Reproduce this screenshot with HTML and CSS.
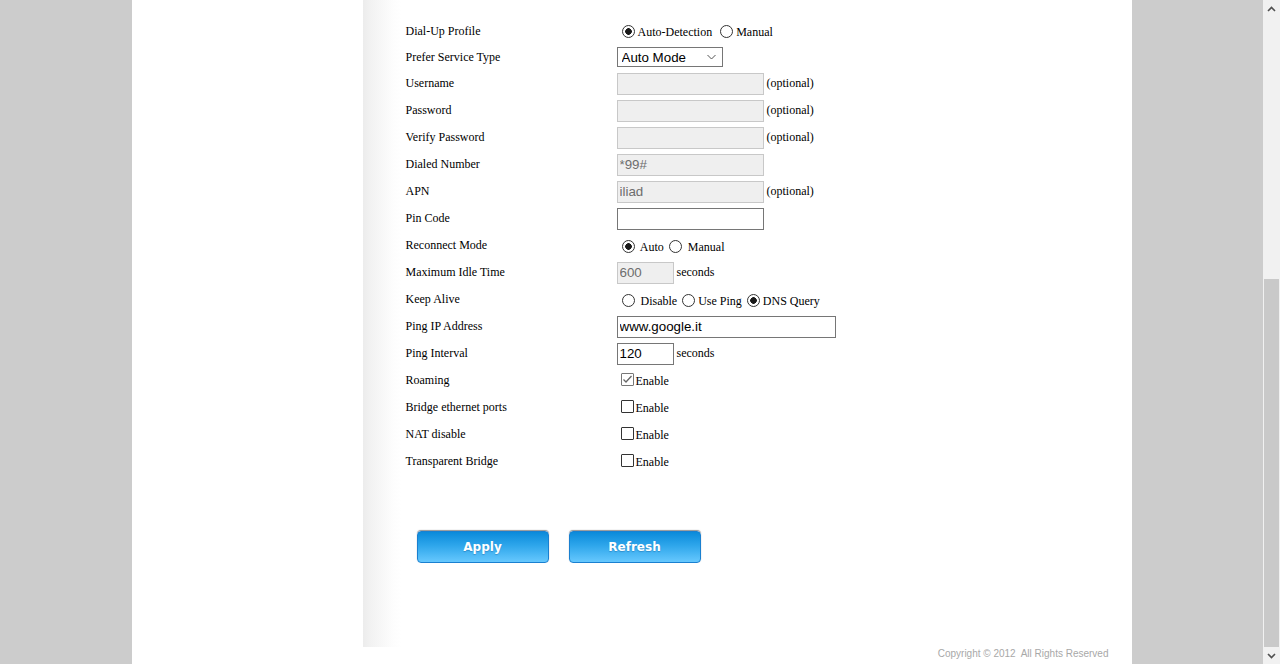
FILE: index.html
```html
<!DOCTYPE html>
<html lang="en">
<head>
<meta charset="utf-8">
<title>Dial-Up Settings</title>
<link rel="stylesheet" href="styles.css">
</head>
<body>
<div class="stage">
  <div class="page">
    <div class="layout">
      <div class="sidebar"></div>
      <div class="content">
        <form class="form">
          <div class="lbl">Dial-Up Profile</div>
          <div class="val"><span class="v"><input type="radio" class="radio" name="prof" checked>Auto-Detection <input type="radio" class="radio" name="prof">Manual</span></div>

          <div class="lbl">Prefer Service Type</div>
          <div class="val"><select class="sel"><option>Auto Mode</option></select></div>

          <div class="lbl">Username</div>
          <div class="val"><span class="v"><input type="text" class="txt dis" disabled> (optional)</span></div>

          <div class="lbl">Password</div>
          <div class="val"><span class="v"><input type="password" class="txt dis" disabled> (optional)</span></div>

          <div class="lbl">Verify Password</div>
          <div class="val"><span class="v"><input type="password" class="txt dis" disabled> (optional)</span></div>

          <div class="lbl">Dialed Number</div>
          <div class="val"><span class="v"><input type="text" class="txt dis" value="*99#" disabled></span></div>

          <div class="lbl">APN</div>
          <div class="val"><span class="v"><input type="text" class="txt dis" value="iliad" disabled> (optional)</span></div>

          <div class="lbl">Pin Code</div>
          <div class="val"><span class="v"><input type="text" class="txt"></span></div>

          <div class="lbl">Reconnect Mode</div>
          <div class="val"><span class="v"><input type="radio" class="radio" name="rec" checked> Auto<input type="radio" class="radio" name="rec"> Manual</span></div>

          <div class="lbl">Maximum Idle Time</div>
          <div class="val"><span class="v"><input type="text" class="txt short dis" value="600" disabled> seconds</span></div>

          <div class="lbl">Keep Alive</div>
          <div class="val"><span class="v"><input type="radio" class="radio" name="ka"> Disable<input type="radio" class="radio" name="ka">Use Ping<input type="radio" class="radio" name="ka" checked>DNS Query</span></div>

          <div class="lbl">Ping IP Address</div>
          <div class="val"><span class="v"><input type="text" class="txt wide" value="www.google.it"></span></div>

          <div class="lbl">Ping Interval</div>
          <div class="val"><span class="v"><input type="text" class="txt short" value="120"> seconds</span></div>

          <div class="lbl">Roaming</div>
          <div class="val"><span class="v"><input type="checkbox" class="chk" checked>Enable</span></div>

          <div class="lbl">Bridge ethernet ports</div>
          <div class="val"><span class="v"><input type="checkbox" class="chk">Enable</span></div>

          <div class="lbl">NAT disable</div>
          <div class="val"><span class="v"><input type="checkbox" class="chk">Enable</span></div>

          <div class="lbl">Transparent Bridge</div>
          <div class="val"><span class="v"><input type="checkbox" class="chk">Enable</span></div>
        </form>
        <div class="actions">
          <button type="button" class="btn">Apply</button>
          <button type="button" class="btn">Refresh</button>
        </div>
      </div>
    </div>
    <div class="footer">Copyright &copy; 2012&nbsp; All Rights Reserved</div>
  </div>
</div>
<div class="scrollbar">
  <div class="sb-btn"><svg width="9" height="6" viewBox="0 0 9 6"><polyline points="1,5 4.5,1.5 8,5" fill="none" stroke="#505050" stroke-width="1.6"/></svg></div>
  <div class="sb-track"><div class="sb-thumb"></div></div>
  <div class="sb-btn"><svg width="9" height="6" viewBox="0 0 9 6"><polyline points="1,1 4.5,4.5 8,1" fill="none" stroke="#505050" stroke-width="1.6"/></svg></div>
</div>
</body>
</html>
```
FILE: styles.css
```css
html, body {
  margin: 0;
  padding: 0;
  height: 664px;
  overflow: hidden;
}
body {
  background: #cccccc;
  display: flex;
  font-family: "Liberation Serif", "Times New Roman", serif;
  font-size: 12px;
  color: #000;
}
.stage {
  flex: 1;
  display: flex;
  justify-content: center;
}
.page {
  width: 1000px;
  background: #fff;
  display: flex;
  flex-direction: column;
}
.layout {
  display: flex;
  height: 647px;
}
.sidebar {
  width: 231px;
}
.content {
  flex: 1;
  padding: 18px 0 0 43px;
  background: linear-gradient(to right, #ececec 0, #f2f2f2 8px, #f8f8f8 20px, #fdfdfd 30px, #ffffff 38px);
}
.form {
  display: grid;
  grid-template-columns: 211px auto;
  grid-template-rows: 26px 26px repeat(15, 27px);
  margin: 0;
}
.lbl {
  display: flex;
  align-items: center;
}
.val {
  display: flex;
  align-items: center;
}
.v {
  white-space: nowrap;
}
.radio {
  appearance: none;
  -webkit-appearance: none;
  width: 13px;
  height: 13px;
  margin: 3px 3px 0 5px;
  border: 1px solid #333;
  border-radius: 50%;
  background: #fff;
  vertical-align: -2px;
  box-sizing: border-box;
}
.radio:checked {
  background: radial-gradient(circle, #1a1a1a 0, #1a1a1a 3px, #fff 3.6px);
}
.chk {
  appearance: none;
  -webkit-appearance: none;
  width: 13px;
  height: 13px;
  margin: 0 2px 0 4px;
  border: 1px solid #333;
  border-radius: 1px;
  background: #fff;
  vertical-align: -1px;
  box-sizing: border-box;
}
.chk:checked {
  border-color: #777;
  background: #fff url("data:image/svg+xml,%3Csvg xmlns='http://www.w3.org/2000/svg' width='11' height='11' viewBox='0 0 11 11'%3E%3Cpolyline points='1.5,5.5 4,8 9.5,2' fill='none' stroke='%23666' stroke-width='1.3'/%3E%3C/svg%3E") center/11px 11px no-repeat;
}
.txt {
  box-sizing: border-box;
  width: 147px;
  height: 22px;
  margin: 0;
  padding: 1px 2px;
  border: 1px solid #767676;
  border-radius: 0;
  font-family: "Liberation Sans", Arial, sans-serif;
  font-size: 13.33px;
  color: #000;
  background: #fff;
  vertical-align: middle;
  outline: none;
}
.txt.dis {
  background: #efefef;
  border-color: #c8c8c8;
  color: #6d6d6d;
}
.txt.short {
  width: 57px;
}
.txt.wide {
  width: 219px;
}
.sel {
  appearance: none;
  -webkit-appearance: none;
  box-sizing: border-box;
  width: 106px;
  height: 20px;
  margin: 0;
  padding: 0 0 0 4px;
  border: 1px solid #767676;
  border-radius: 0;
  font-family: "Liberation Sans", Arial, sans-serif;
  font-size: 13.33px;
  color: #000;
  background: #fff url("data:image/svg+xml,%3Csvg xmlns='http://www.w3.org/2000/svg' width='9' height='6' viewBox='0 0 9 6'%3E%3Cpolyline points='0.5,1 4.5,5 8.5,1' fill='none' stroke='%23555' stroke-width='1'/%3E%3C/svg%3E") right 6px center/9px 6px no-repeat;
}
.actions {
  display: flex;
  gap: 20px;
  margin: 56px 0 0 11px;
}
.btn {
  width: 132px;
  height: 32px;
  border: 1px solid #1a80d0;
  border-radius: 4px;
  background: linear-gradient(to bottom, #0a8ada 0%, #2ea6eb 45%, #66c8fe 100%);
  box-shadow: 0 -1px 1px rgba(60, 60, 60, 0.55);
  color: #fff;
  font-family: "DejaVu Sans", Verdana, sans-serif;
  font-weight: bold;
  font-size: 12px;
  text-shadow: 0 1px 1px rgba(0, 60, 120, 0.3);
  padding: 0;
  cursor: pointer;
}
.footer {
  flex: 1;
  text-align: right;
  padding-right: 23px;
  font-family: "Liberation Sans", Arial, sans-serif;
  font-size: 10px;
  line-height: 13px;
  color: #a8a8a8;
}
.scrollbar {
  width: 17px;
  background: #f1f1f1;
  display: flex;
  flex-direction: column;
}
.sb-btn {
  height: 17px;
  display: flex;
  align-items: center;
  justify-content: center;
}
.sb-track {
  flex: 1;
  display: flex;
  flex-direction: column;
  padding-top: 262px;
}
.sb-thumb {
  flex: 1;
  margin: 0 1px 0 1px;
  background: #c9c9c9;
}
```
